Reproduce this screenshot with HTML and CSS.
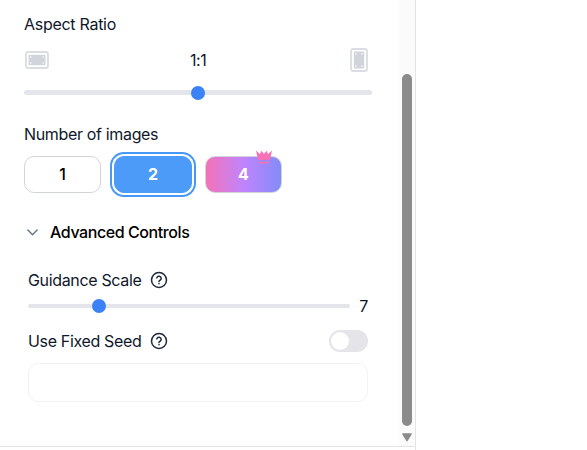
FILE: index.html
```
<!DOCTYPE html>
<html lang="en">
<head>
  <meta charset="UTF-8" />
  <title>Image Settings</title>
  <link rel="stylesheet" href="styles.css">
</head>
<body>

  <div class="sidebar">
    <div class="panel">
      <div class="settings">

        <!-- Aspect ratio -->
        <div class="label label-ratio">Aspect Ratio</div>
        <div class="ratio-row">
          <svg class="ratio-wide" width="24" height="18" viewBox="0 0 24 18">
            <rect x="1" y="1" width="22" height="16" rx="2" fill="#fff" stroke="#d9dce2" stroke-width="1.8"/>
            <rect x="3.5" y="3.8" width="17" height="10.4" rx="1" fill="#d1d5db"/>
            <path d="M5 5.2h1.5v1.5H5zM17.5 5.2H19v1.5h-1.5zM5 11.3h1.5v1.5H5zM17.5 11.3H19v1.5h-1.5z" fill="#f3f4f6"/>
          </svg>
          <span class="ratio-value">1:1</span>
          <svg class="ratio-tall" width="18" height="24" viewBox="0 0 18 24">
            <rect x="1" y="1" width="16" height="22" rx="2" fill="#fff" stroke="#d9dce2" stroke-width="1.8"/>
            <rect x="3.8" y="3.5" width="10.4" height="17" rx="1" fill="#d1d5db"/>
            <path d="M5.2 5h1.5v1.5H5.2zM11.3 5h1.5v1.5h-1.5zM5.2 17.5h1.5V19H5.2zM11.3 17.5h1.5V19h-1.5z" fill="#f3f4f6"/>
          </svg>
        </div>
        <div class="slider">
          <div class="slider-thumb" style="left: 50%"></div>
        </div>

        <!-- Number of images -->
        <div class="label label-images">Number of images</div>
        <div class="count-row">
          <button class="count">1</button>
          <button class="count count-active">2</button>
          <button class="count count-premium">4
            <svg class="crown" width="16" height="14" viewBox="0 0 16 14">
              <path d="M0 .5 4 4 5.6 .8 8 4 10.4 .8 12 4 16 .5 13.9 10H2.1z" fill="#f472b6"/>
              <path d="M2.5 11.7h11v1.7h-11z" fill="#f472b6"/>
            </svg>
          </button>
        </div>

        <!-- Advanced controls -->
        <div class="advanced-title">
          <svg width="11" height="7" viewBox="0 0 11 7" fill="none" stroke="#64748b" stroke-width="1.4" stroke-linecap="round" stroke-linejoin="round">
            <path d="M.9 1 5.5 5.8 10.1 1"/>
          </svg>
          <span>Advanced Controls</span>
        </div>

        <div class="advanced">
          <div class="field">
            <span>Guidance Scale</span>
            <svg class="help" width="18" height="18" viewBox="0 0 18 18" fill="none" stroke="#1e293b" stroke-width="1.5" stroke-linecap="round" stroke-linejoin="round">
              <circle cx="9" cy="9" r="7.5"/>
              <path d="M6.8 6.9a2.25 2.25 0 0 1 4.4.7c0 1.5-2.2 1.8-2.2 2.8M9 12.6v.1"/>
            </svg>
          </div>
          <div class="guidance-row">
            <div class="slider slider-guidance">
              <div class="slider-thumb" style="left: 22%"></div>
            </div>
            <span>7</span>
          </div>
          <div class="field seed">
            <span>Use Fixed Seed</span>
            <svg class="help" width="18" height="18" viewBox="0 0 18 18" fill="none" stroke="#1e293b" stroke-width="1.5" stroke-linecap="round" stroke-linejoin="round">
              <circle cx="9" cy="9" r="7.5"/>
              <path d="M6.8 6.9a2.25 2.25 0 0 1 4.4.7c0 1.5-2.2 1.8-2.2 2.8M9 12.6v.1"/>
            </svg>
            <div class="toggle"><div class="toggle-knob"></div></div>
          </div>
          <input class="seed-input" type="text">
        </div>

      </div>

      <div class="scrollbar">
        <div class="scrollbar-thumb"></div>
        <svg width="12" height="10" viewBox="0 0 12 10">
          <path d="M2 2h8L6 8.5z" fill="#8b8b8b" stroke="#8b8b8b" stroke-width="1.5" stroke-linejoin="round"/>
        </svg>
      </div>
    </div>
  </div>

</body>
</html>
```

FILE: styles.css
```
* {
  box-sizing: border-box;
}

body {
  margin: 0;
  height: 450px;
  overflow: hidden;
  font-family: 'Inter', sans-serif;
  font-size: 16px;
  line-height: 24px;
  letter-spacing: -0.34px;
  color: #0f172a;
  background-color: #fff;
}

.sidebar {
  width: 416px;
  height: 450px;
  border-right: 1px solid #e2e4e8;
}

.panel {
  display: flex;
  height: 447px;
  border-bottom: 1px solid #e2e4ea;
}

.settings {
  width: 399px;
  padding: 12px 27px 0 24px;
}

.label-ratio {
  letter-spacing: -0.28px;
}

.label-images {
  margin-top: 27px;
}

.ratio-row {
  display: flex;
  align-items: center;
  justify-content: space-between;
  height: 24px;
  margin-top: 12px;
  padding: 0 3.5px 0 1px;
}

.ratio-value {
  padding-right: 3px;
}

.slider {
  position: relative;
  height: 5px;
  margin-top: 18px;
  border-radius: 3px;
  background-color: #e4e5ea;
}

.slider-thumb {
  position: absolute;
  top: 50%;
  width: 14px;
  height: 14px;
  border-radius: 50%;
  background-color: #3b82f6;
  transform: translate(-50%, -50%);
}

.count-row {
  display: flex;
  gap: 13px;
  margin-top: 10px;
}

.count {
  position: relative;
  width: 77px;
  height: 37px;
  padding: 0 0 2px;
  font-family: inherit;
  font-size: 16px;
  font-weight: 500;
  color: #000;
  background-color: #fff;
  border: 1px solid #d1d5db;
  border-radius: 10px;
}

.count-active {
  width: 78px;
  font-weight: 700;
  color: #fff;
  background-color: #4d9bf9;
  border-color: #4d9bf9;
  box-shadow: 0 0 0 2px #fff, 0 0 0 4px #4797f8;
}

.count-premium {
  font-weight: 700;
  color: #fff;
  background: linear-gradient(to right, #f472b6, #c084fc 50%, #818cf8) border-box;
}

.crown {
  position: absolute;
  top: -7px;
  right: 9px;
}

.advanced-title {
  display: flex;
  align-items: center;
  gap: 12px;
  margin-top: 27px;
  padding-left: 3px;
  font-weight: 500;
  letter-spacing: -0.42px;
  color: #000;
}

.advanced {
  padding: 24px 4px 0;
}

.field {
  display: flex;
  align-items: center;
  gap: 8.5px;
  height: 24px;
}

.guidance-row {
  display: flex;
  align-items: center;
  justify-content: space-between;
  height: 24px;
  margin-top: 2px;
}

.slider-guidance {
  width: 322px;
  height: 4px;
  margin-top: 0;
}

.seed {
  margin-top: 11px;
}

.toggle {
  width: 39px;
  height: 22px;
  margin-left: auto;
  padding: 2px;
  border-radius: 11px;
  background-color: #e4e4e9;
}

.toggle-knob {
  width: 18px;
  height: 18px;
  border-radius: 50%;
  background-color: #fff;
}

.seed-input {
  display: block;
  width: 100%;
  height: 39px;
  margin-top: 10px;
  padding: 0 12px;
  font: inherit;
  background-color: #fff;
  border: 1px solid #f1f2f7;
  border-radius: 10px;
}

.scrollbar {
  display: flex;
  flex-direction: column;
  align-items: center;
  width: 16px;
  padding-top: 74px;
  background-color: #fbfbfb;
}

.scrollbar-thumb {
  width: 10px;
  height: 352px;
  margin-bottom: 6px;
  border-radius: 5px;
  background-color: #8b8b8b;
}
```
